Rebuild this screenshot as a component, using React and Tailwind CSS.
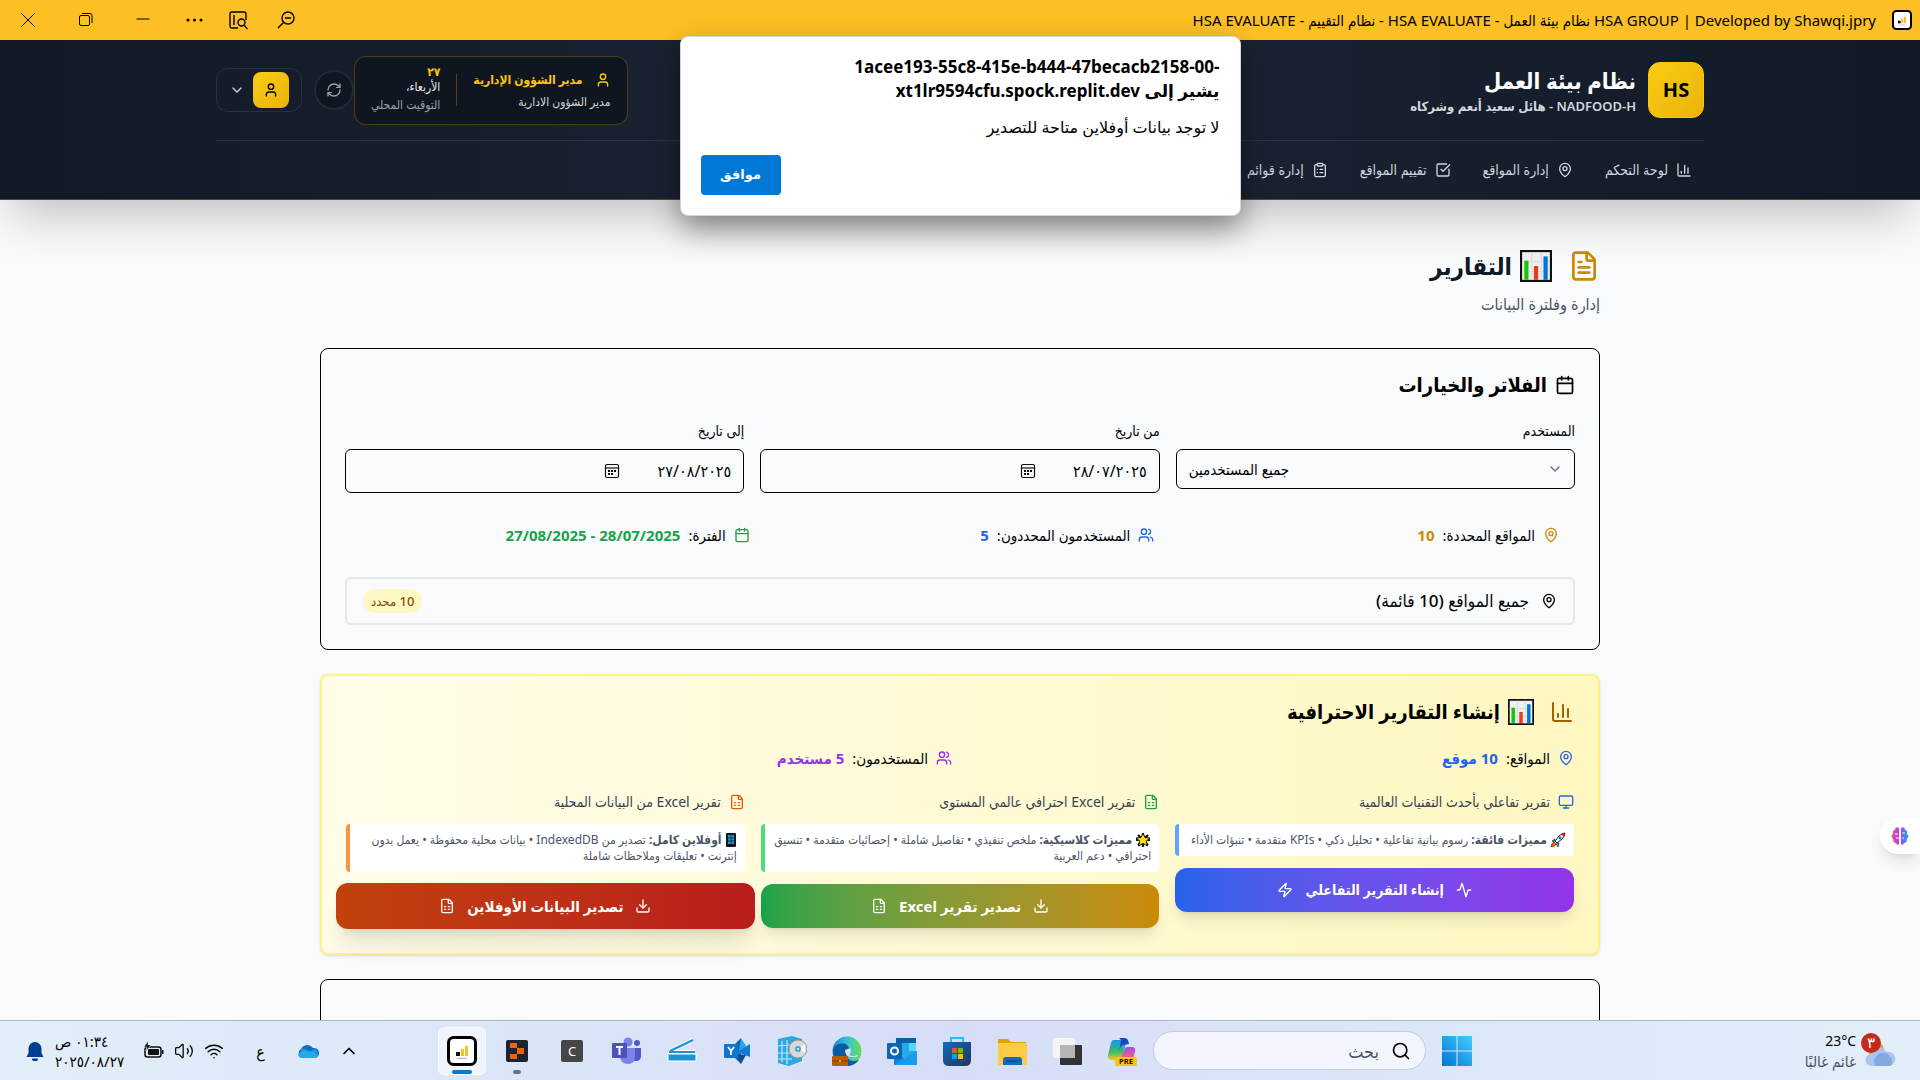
import React from "react";
import {
  Activity, Calendar, ChartColumn, ChevronDown, ChevronUp, ClipboardList, Download, FileSpreadsheet,
  FileText, MapPin, Monitor, RefreshCw, Search, SquareCheckBig, User, Users, Volume2, Wifi, Zap,
} from "lucide-react";

const ChartEmoji = ({ className }) => (
  <svg className={className} viewBox="0 0 30 30" aria-hidden="true">
    <rect x="1" y="1" width="28" height="28" fill="#f0f0f0" stroke="#111" strokeWidth="2" />
    <path d="M2 11h26M2 20h26M11 2v26M20 2v26" stroke="#d9d9d9" strokeWidth="1" />
    <path fill="#16c60c" d="M4 10h4v18H4z" />
    <path fill="#f03a17" d="M13 15h4v13h-4z" />
    <path fill="#0078d7" d="M22 6h4v22h-4z" />
  </svg>
);

const Rocket = () => (
  <svg className="inline-block size-4 align-text-bottom" viewBox="0 0 16 16" aria-hidden="true">
    <path d="M5 9 9 4q3-3 6-3 0 3-3 6l-5 4z" fill="#f4f4f4" stroke="#222" />
    <path d="M11 2q2-1 4-1 0 2-1 4z" fill="#e81224" />
    <path d="M5 7 2 9l2 1zM9 11l-1 4-2-3z" fill="#3ac5f0" stroke="#222" strokeWidth=".7" />
    <path d="M1 15q0-4 3-5l2 2q-1 3-5 3z" fill="#f7630c" stroke="#222" strokeWidth=".5" />
    <circle cx="10" cy="6" r="1.4" fill="#0078d7" />
  </svg>
);

const Star = () => (
  <svg className="inline-block size-4 align-text-bottom" viewBox="0 0 16 16" aria-hidden="true">
    <path d="M8 1v14M1 8h14M3 3l10 10M13 3 3 13" stroke="#111" strokeWidth="2.200" />
    <path d="m8 1 2 4.600 5 .4-3.800 3.200L12.400 14 8 11.400 3.600 14l1.200-4.800L1 6l5-.4z" fill="#ffe000" stroke="#111" />
  </svg>
);

const Phone = () => (
  <svg className="inline-block h-4 w-3 align-text-bottom" viewBox="0 0 12 16" aria-hidden="true">
    <rect x="1" y="1" width="10" height="14" rx="1" fill="#161616" />
    <path fill="#0a9be0" d="M3 3h6v9H3z" />
    <path d="M6 3v9M3 6h6M3 9h6" stroke="#161616" strokeWidth=".7" />
  </svg>
);

const AppBadge = ({ className }) => (
  <svg className={className} viewBox="0 0 30 30" aria-hidden="true">
    <rect x="1.500" y="1.500" width="27" height="27" rx="5" fill="#fff" stroke="#000" strokeWidth="3" />
    <path fill="#111" d="M9 16h4v4H9z" />
    <path fill="#fbbf24" d="M14 13h3v7h-3zM18 10h3v10h-3z" />
    <path stroke="#999" strokeWidth=".8" d="M10 22.500h10" />
  </svg>
);

function TitleBar() {
  return (
    <div className="flex h-10 shrink-0 items-center justify-between bg-[#fcbf24] pl-[18px] pr-2 text-black">
      <div className="flex items-center gap-4 text-[15px] leading-5 font-['Noto_Sans','DejaVu_Sans_Condensed','DejaVu_Sans',sans-serif]">
        <AppBadge className="size-5" />
        <span>HSA GROUP | Developed by Shawqi.jpry نظام بيئة العمل - HSA EVALUATE - نظام التقييم - HSA EVALUATE</span>
      </div>
      <div dir="ltr" className="flex items-center">
        <button aria-label="إغلاق" className="mr-[38px]">
          <svg className="size-5" viewBox="0 0 20 20" stroke="currentColor" fill="none"><path d="m3.500 3.500 13 13M16.500 3.500l-13 13" /></svg>
        </button>
        <button aria-label="استعادة" className="mr-[37px]">
          <svg className="size-5" viewBox="0 0 20 20" stroke="currentColor" fill="none"><rect x="3.500" y="5.500" width="10" height="10" rx="1.500" /><path d="M6 3.500h8a2 2 0 0 1 2 2V13" /></svg>
        </button>
        <button aria-label="تصغير" className="mr-8">
          <svg className="size-5" viewBox="0 0 20 20" stroke="currentColor"><path d="M3.500 9h13" /></svg>
        </button>
        <button aria-label="المزيد" className="mr-6">
          <svg className="size-5" viewBox="0 0 20 20" fill="currentColor"><circle cx="3" cy="10" r="1.500" /><circle cx="9.500" cy="10" r="1.500" /><circle cx="16" cy="10" r="1.500" /></svg>
        </button>
        <button aria-label="بحث في الصفحة" className="mr-7">
          <svg className="size-5" viewBox="0 0 20 20" stroke="currentColor" fill="none" strokeWidth="1.400"><path d="M9 18H3a2 2 0 0 1-2-2V4a2 2 0 0 1 2-2h12a2 2 0 0 1 2 2v6M5 5v10" /><circle cx="12.500" cy="12.500" r="3.500" /><path d="m15 15 3.500 4" /></svg>
        </button>
        <button aria-label="تصغير العرض">
          <svg className="size-5" viewBox="0 0 20 20" stroke="currentColor" fill="none" strokeWidth="1.400"><circle cx="11" cy="8" r="6" /><path d="M8 8h6M6.500 12.500 1 18" /></svg>
        </button>
      </div>
    </div>
  );
}

const navItems = [
  [ChartColumn, "لوحة التحكم"],
  [MapPin, "إدارة المواقع"],
  [SquareCheckBig, "تقييم المواقع"],
  [ClipboardList, "إدارة قوائم"],
];

function Header() {
  return (
    <header className="relative z-10 shrink-0 border-b border-yellow-500/30 bg-linear-to-r from-[#121826] via-[#1c2635] to-[#121826] shadow-2xl">
      <div className="mx-auto max-w-[1536px] px-6">
        <div className="flex h-[101px] items-center justify-between border-b border-slate-700/60">
          <div className="flex items-center gap-3">
            <div className="flex size-14 items-center justify-center rounded-xl border border-yellow-400 bg-linear-to-br from-[#facc15] to-[#eab308] text-xl font-bold text-black">HS</div>
            <div>
              <h1 className="text-[22px] leading-8 font-bold text-white">نظام بيئة العمل</h1>
              <p className="text-[13px] leading-5 font-semibold text-gray-300">NADFOOD-H - هائل سعيد أنعم وشركاه</p>
            </div>
          </div>
          <div className="flex items-center">
            <div className="flex h-[69px] items-center rounded-xl border border-yellow-500/25 bg-[#10161f] px-4">
              <div className="pl-4">
                <div className="flex items-center gap-3 text-xs leading-5 font-bold text-yellow-400">
                  <User className="size-4" />مدير الشؤون الإدارية
                </div>
                <div className="mt-1 text-xs leading-4 text-gray-300">مدير الشؤون الادارية</div>
              </div>
              <div className="h-8 w-px bg-yellow-500/30" />
              <div className="pr-4 text-xs">
                <div className="leading-[10px] font-bold text-yellow-400">٢٧</div>
                <div className="leading-5 text-gray-200">الأربعاء،</div>
                <div className="leading-4 text-gray-400">التوقيت المحلي</div>
              </div>
            </div>
            <button aria-label="تحديث" className="flex size-10 items-center justify-center rounded-full border-2 border-gray-800 bg-[#10161f] text-gray-400">
              <RefreshCw className="size-4" />
            </button>
            <button aria-label="حساب المستخدم" className="mr-3 flex h-11 w-[86px] items-center justify-between rounded-xl border border-slate-700/60 pr-3 pl-3 text-gray-300">
              <span className="flex size-9 items-center justify-center rounded-lg bg-linear-to-br from-[#facc15] to-[#eab308] text-black"><User className="size-4" /></span>
              <ChevronDown className="size-4" />
            </button>
          </div>
        </div>
        <nav className="flex h-[58px] items-center gap-2">
          {navItems.map(([Icon, label]) => (
            <a key={label} href="#" className="flex items-center gap-2 px-3 text-sm leading-5 font-medium text-gray-300">
              <Icon className="size-4" />{label}
            </a>
          ))}
        </nav>
      </div>
    </header>
  );
}

const CalendarGrid = () => (
  <svg className="size-4" viewBox="0 0 16 16" fill="none" stroke="#111" strokeWidth="1.200" aria-hidden="true">
    <rect x="1.500" y="1.500" width="13" height="13" rx="1.500" /><path d="M1.500 5h13" />
    <path d="M4 8h2M7 8h2M10 8h2M4 11h2M7 11h2" strokeWidth="1.800" />
  </svg>
);

function DateField({ id, label, value }) {
  return (
    <div>
      <label htmlFor={id} className="block text-sm leading-5 text-black">{label}</label>
      <div className="mt-2 flex h-11 items-center rounded-md border border-black px-3">
        <input id={id} type="text" defaultValue={value} className="w-[111px] bg-transparent text-base text-black outline-none" />
        <button aria-label="فتح التقويم"><CalendarGrid /></button>
      </div>
    </div>
  );
}

function Stat({ icon: Icon, color, label, value }) {
  return (
    <div className="flex items-center gap-2 text-[15px] leading-5 text-black">
      <Icon className={`size-4 ${color}`} />
      <span>{label}</span>
      <span className={`font-bold ${color}`}>{value}</span>
    </div>
  );
}

function Filters() {
  return (
    <section className="rounded-lg border border-black p-6 pt-5">
      <h2 className="flex items-center gap-2 text-xl leading-8 font-bold text-black"><Calendar className="size-5" />الفلاتر والخيارات</h2>
      <div className="mt-5 grid grid-cols-3 gap-4">
        <div>
          <label htmlFor="user" className="block text-sm leading-5 text-black">المستخدم</label>
          <div className="relative mt-2">
            <select id="user" dir="ltr" className="h-10 w-full appearance-none rounded-md border border-black bg-transparent px-3 text-[15px] text-black">
              <option>جميع المستخدمين</option>
            </select>
            <ChevronDown className="pointer-events-none absolute top-3 right-3 size-4 text-gray-500" />
          </div>
        </div>
        <DateField id="from" label="من تاريخ" value="٢٨/٠٧/٢٠٢٥" />
        <DateField id="to" label="إلى تاريخ" value="٢٧/٠٨/٢٠٢٥" />
      </div>
      <div className="mt-4 grid grid-cols-3 gap-4 px-4 py-4">
        <Stat icon={MapPin} color="text-[#ca8a04]" label="المواقع المحددة:" value="10" />
        <Stat icon={Users} color="text-[#2563eb]" label="المستخدمون المحددون:" value="5" />
        <Stat icon={Calendar} color="text-[#16a34a]" label="الفترة:" value="28/07/2025 - 27/08/2025" />
      </div>
      <div className="mt-4 flex h-12 items-center justify-between rounded-md border-2 border-gray-200 px-4">
        <div className="flex items-center gap-3 text-[17px] leading-6 font-medium text-black"><MapPin className="size-4" />جميع المواقع (10 قائمة)</div>
        <span className="rounded-full bg-[#fef9c3] px-2 py-1 text-[13px] leading-4 font-medium text-[#854d0e]">10 محدد</span>
      </div>
    </section>
  );
}

function ReportColumn({ icon: Icon, iconColor, title, border, children, button }) {
  return (
    <div>
      <div className="flex items-center gap-2 text-sm leading-5 text-gray-700"><Icon className={`size-4 ${iconColor}`} />{title}</div>
      <div className={`mt-3 rounded border-l-4 bg-white p-2 text-xs leading-4 text-gray-600 ${border}`}>{children}</div>
      {button}
    </div>
  );
}

function Reports() {
  return (
    <section className="mt-6 rounded-lg border-2 border-[#fef08a] bg-linear-to-r from-[#fffce8] to-[#fef7c0] px-6 pt-5 pb-6 shadow-sm">
      <h2 className="flex items-center gap-4 text-xl leading-8 font-bold text-black">
        <ChartColumn className="size-6 text-[#a16207]" />
        <span className="flex items-center gap-2"><ChartEmoji className="size-[26px]" />إنشاء التقارير الاحترافية</span>
      </h2>
      <div className="mt-5 grid grid-cols-2 gap-4">
        <Stat icon={MapPin} color="text-[#2563eb]" label="المواقع:" value="10 موقع" />
        <Stat icon={Users} color="text-[#9333ea]" label="المستخدمون:" value="5 مستخدم" />
      </div>
      <div className="mt-6 grid grid-cols-3 gap-4">
        <ReportColumn icon={Monitor} iconColor="text-[#2563eb]" title="تقرير تفاعلي بأحدث التقنيات العالمية" border="border-l-[#60a5fa]"
          button={
            <button className="mt-3 flex h-11 w-full items-center justify-center gap-3 rounded-xl bg-linear-to-r from-[#2563eb] to-[#9333ea] text-sm font-bold text-white shadow-lg">
              <Activity className="size-4" />إنشاء التقرير التفاعلي<Zap className="size-4" />
            </button>
          }>
          <Rocket /> <strong>مميزات فائقة:</strong> رسوم بيانية تفاعلية • تحليل ذكي • KPIs متقدمة • تنبؤات الأداء
        </ReportColumn>
        <ReportColumn icon={FileSpreadsheet} iconColor="text-[#16a34a]" title="تقرير Excel احترافي عالمي المستوى" border="border-l-[#4ade80]"
          button={
            <button className="mt-3 flex h-11 w-full items-center justify-center gap-3 rounded-xl bg-linear-to-r from-[#16a34a] to-[#ca8a04] text-[15px] font-bold text-white shadow-lg">
              <Download className="size-4" />تصدير تقرير Excel<FileSpreadsheet className="size-4" />
            </button>
          }>
          <Star /> <strong>مميزات كلاسيكية:</strong> ملخص تنفيذي • تفاصيل شاملة • إحصائيات متقدمة • تنسيق احترافي • دعم العربية
        </ReportColumn>
        <ReportColumn icon={FileSpreadsheet} iconColor="text-[#ea580c]" title="تقرير Excel من البيانات المحلية" border="border-l-[#fb923c]"
          button={
            <div className="-mx-[10px] mt-[11px]">
              <button className="flex h-[46px] w-full items-center justify-center gap-3 rounded-xl bg-linear-to-r from-[#c2410c] to-[#b91c1c] text-[15px] font-bold text-white shadow-xl">
                <Download className="size-4" />تصدير البيانات الأوفلاين<FileSpreadsheet className="size-4" />
              </button>
            </div>
          }>
          <Phone /> <strong>أوفلاين كامل:</strong> تصدير من IndexedDB • بيانات محلية محفوظة • يعمل بدون إنترنت • تعليقات وملاحظات شاملة
        </ReportColumn>
      </div>
    </section>
  );
}

function Dialog() {
  return (
    <div role="alertdialog" aria-labelledby="dialog-title" className="absolute inset-x-0 top-9 z-30 mx-auto w-[561px] rounded-lg border border-gray-300 bg-white px-5 pt-[18px] pb-5 text-black shadow-[0_14px_30px_rgba(0,0,0,0.4)] font-['Noto_Sans','DejaVu_Sans',sans-serif]">
      <div id="dialog-title" className="text-[17px] leading-6 font-bold">
        <div dir="ltr" className="text-right">1acee193-55c8-415e-b444-47becacb2158-00-</div>
        <div>يشير إلى xt1lr9594cfu.spock.replit.dev</div>
      </div>
      <p className="mt-3 text-base leading-6">لا توجد بيانات أوفلاين متاحة للتصدير</p>
      <div className="mt-4 flex justify-end">
        <button className="h-10 w-20 rounded bg-[#0078d7] text-[13px] font-bold text-white">موافق</button>
      </div>
    </div>
  );
}

const apps = [
  ["Copilot", <g><path d="M6 4h14l-6 20H5q-5 0-4-5L4 7q1-3 2-3z" fill="url(#cpA)" /><path d="M20 11h5q4 0 3 5l-2 8H13l4-10q1-3 3-3z" fill="url(#cpB)" /><path d="M12 2h6q3 0 4 6l-6 1q-3 0-4 8l2-13z" fill="#1648c8" /><rect x="8" y="21" width="22" height="9" rx="2" fill="#fcc419" /><text x="19" y="28" fontSize="7.500" fontWeight="700" textAnchor="middle" fill="#111" fontFamily="Noto Sans">PRE</text></g>],
  ["عرض المهام", <g><rect x="8" y="9" width="22" height="20" rx="1" fill="#333" /><rect x="1" y="2" width="22" height="20" rx="1" fill="#f4f4f4" /><path d="M8 9h15v13H8z" fill="#b5b5b5" /></g>],
  ["مستكشف الملفات", <g><path d="M1 3h10l3 3h15v6H1z" fill="#e0a30b" /><rect x="1" y="7" width="29" height="22" rx="1" fill="#ffcb45" /><path d="M6 29v-5q0-3 3-3h13q3 0 3 3v5z" fill="#0f6cbd" /><path d="M9 25h13" stroke="#083f73" /></g>],
  ["المتجر", <g><path d="M9 7V2h12v5" fill="none" stroke="#24bdf2" strokeWidth="2" /><path d="M1 6h28v18q0 6-6 6H7q-6 0-6-6z" fill="url(#st)" /><path fill="#f25022" d="M10 12h5v5h-5z" /><path fill="#7fba00" d="M16 12h5v5h-5z" /><path fill="#00a4ef" d="M10 18h5v5h-5z" /><path fill="#ffb900" d="M16 18h5v5h-5z" /></g>],
  ["Outlook", <g><path fill="#28a8ea" d="M9 2h20v20H9z" /><path fill="#0a5fa8" d="M9 2h20v5H9z" /><path fill="#50d9ff" d="M22 7h7v8h-7z" /><path fill="#1283d8" d="m7 15 11 8 12-8v14H7z" /><path fill="#1a9bea" d="m7 29 23-14v14z" /><rect x="0" y="7" width="15" height="16" rx="1" fill="#0a66b7" /><circle cx="7.500" cy="15" r="3.500" fill="none" stroke="#fff" strokeWidth="2" /></g>],
  ["Edge", <g><circle cx="15" cy="15" r="14.500" fill="url(#eg)" /><path d="M1 14C4 5 17 6 17 13q-5 2-2 8t12 3q-5 6-12 6Q1 29 1 14z" fill="#0c59a4" /><path d="M13 14q6-3 6 0t-2 5q4 2 9 0 0 2-4 2-9 1-9-7z" fill="#dbe4f7" /><rect x="0" y="20" width="16" height="10" rx="1" fill="#b85c00" /><path d="M0 25h16" stroke="#7b3c00" /><circle cx="8" cy="25" r="1" fill="#ffc83d" /></g>],
  ["التثبيت", <g><path d="m1 3 14-3 10 3v22l-13 5L1 27z" fill="#2ca7e0" /><path d="M5 5v21M10 4v24M1 10l13-1M1 17h14M1 23h14" stroke="#bce9fb" strokeWidth="1.200" /><circle cx="21" cy="13" r="9" fill="#d9d9d9" stroke="#999" /><path d="m21 13 7-5v9z" fill="#f7f7f7" /><circle cx="21" cy="13" r="3" fill="#3ea9cb" /><circle cx="21" cy="13" r="1" fill="#fff" /></g>],
  ["Viva Engage", <g><path d="M19 2v26l-7-7V9z" fill="#0b63b0" /><path d="m19 2 5 8-8 9z" fill="#23a6ec" /><path d="m15 16 13-8v13z" fill="#1479d4" /><path d="m14 18 10 1-5 9z" fill="#0a4e8f" /><rect x="2" y="8" width="14" height="14" rx="1" fill="#1074d0" /><path d="m6 11 3 4 3-4M9 15v4" fill="none" stroke="#fff" strokeWidth="1.800" /></g>],
  ["الماسح", <g><path d="m3 15 23-11M2 16h26" stroke="#fff" strokeWidth="4" /><path d="m3 15 23-11" stroke="#1e94cf" strokeWidth="2.400" /><path d="M2 16h26" stroke="#1e94cf" strokeWidth="2" /><path d="M1 18h28v7H1z" fill="#1e94cf" stroke="#fff" /></g>],
  ["Teams", <g><circle cx="25" cy="7" r="3" fill="#5059c9" /><path d="M18 12h11v8q0 5-5 5h-6z" fill="#5059c9" /><circle cx="16" cy="6" r="4.500" fill="#7b83eb" /><path d="M8 12h15v9q0 7-7 7t-8-7z" fill="#7b83eb" /><rect x="0" y="7" width="15" height="15" rx="1" fill="#4b53bc" /><path d="M4 11h7M7.500 11v8" stroke="#fff" strokeWidth="2" /></g>],
  ["C", <g><rect x="4" y="4" width="22" height="22" rx="2" fill="#464646" /><text x="15" y="20" fontSize="13" textAnchor="middle" fill="#fff" fontFamily="Noto Sans">C</text></g>],
  ["Replit", <g><rect x="4" y="4" width="22" height="22" rx="2" fill="#1c2333" /><path fill="#f26207" d="M8 7h7v5H8zM15 12h7v6h-7zM8 18h7v5H8z" /></g>],
];

function Taskbar() {
  return (
    <footer className="grid h-[60px] shrink-0 grid-cols-[1fr_auto_1fr] items-center border-t border-[#b0b6c3] bg-linear-to-r from-[#e2eef9] via-[#d6def7] to-[#e2effa]">
      <svg width="0" height="0" className="absolute" aria-hidden="true">
        <defs>
          <linearGradient id="cpA" x1="0" y1="0" x2="0" y2="1"><stop stopColor="#1597e8" /><stop offset=".6" stopColor="#3dbb6a" /><stop offset="1" stopColor="#f7c81e" /></linearGradient>
          <linearGradient id="cpB" x1="0" y1="0" x2="0" y2="1"><stop stopColor="#a44cf0" /><stop offset="1" stopColor="#ff6a5f" /></linearGradient>
          <linearGradient id="st" x1="0" y1="0" x2="1" y2="1"><stop stopColor="#0f6cbd" /><stop offset="1" stopColor="#25355c" /></linearGradient>
          <linearGradient id="eg"><stop stopColor="#1b83d8" /><stop offset=".5" stopColor="#33c3d8" /><stop offset="1" stopColor="#6bdc4f" /></linearGradient>
          <linearGradient id="win" x1="0" y1="1" x2="1" y2="0"><stop stopColor="#0075d4" /><stop offset="1" stopColor="#45cdfb" /></linearGradient>
          <linearGradient id="brain"><stop stopColor="#f0568d" /><stop offset=".5" stopColor="#a43df5" /><stop offset="1" stopColor="#1ba8f5" /></linearGradient>
        </defs>
      </svg>
      <div className="flex items-center gap-1 pr-6">
        <svg className="size-9" viewBox="0 0 36 36" aria-hidden="true">
          <circle cx="16" cy="17" r="8" fill="#f9a11b" />
          <path d="M12 33a6 6 0 0 1-1-12 8 8 0 0 1 15-2 7 7 0 0 1 4 14z" fill="#a9c5ee" />
          <path d="M16 33a6 6 0 0 1 0-9 8 8 0 0 1 14 0 6 6 0 0 1 0 9z" fill="#83a9e0" />
          <circle cx="11" cy="10" r="10" fill="#c42b1c" />
          <text x="11" y="15" fontSize="15" textAnchor="middle" fill="#fff" fontFamily="DejaVu Sans">٣</text>
        </svg>
        <div className="text-sm leading-5">
          <div dir="ltr" className="text-right text-black">23°C</div>
          <div className="text-[15px] text-gray-600">غائم غالبًا</div>
        </div>
      </div>
      <div className="flex items-center pr-[10px]">
        <button aria-label="ابدأ" className="ml-4">
          <svg className="size-[30px]" viewBox="0 0 30 30"><path fill="url(#win)" d="M0 0h14.500v14.500H0zM15.500 0H30v14.500H15.500zM0 15.500h14.500V30H0zM15.500 15.500H30V30H15.500z" /></svg>
        </button>
        <label className="ml-4 flex h-[39px] w-[273px] items-center gap-3 rounded-full border border-[#c5cbe0] bg-[#f2f5fd] px-[14px]">
          <Search className="size-5 shrink-0 text-black" />
          <input placeholder="بحث" aria-label="بحث" className="w-40 bg-transparent text-lg outline-none placeholder:text-gray-600" />
        </label>
        <div className="flex items-center gap-[25px]">
          {apps.map(([name, art]) => (
            <button key={name} aria-label={name} className="relative">
              <svg className="size-[30px]" viewBox="0 0 30 30">{art}</svg>
              {name === "Replit" && <span className="absolute inset-x-0 -bottom-2 mx-auto h-1 w-2 rounded-full bg-gray-500" />}
            </button>
          ))}
        </div>
        <button aria-label="HSA" className="relative mr-4 flex size-12 items-center justify-center rounded-md border border-white/60 bg-white/50">
          <AppBadge className="size-[30px]" />
          <span className="absolute inset-x-0 bottom-0 mx-auto h-1 w-5 rounded-full bg-[#0078d4]" />
        </button>
      </div>
      <div className="flex items-center justify-end pl-[25px] text-black">
        <button aria-label="إظهار الرموز المخفية" className="ml-5"><ChevronUp className="size-5" /></button>
        <svg className="ml-8 size-[22px]" viewBox="0 0 22 22" aria-hidden="true"><path d="M5 18a5 5 0 0 1-1-9 7 7 0 0 1 12-1 5 5 0 0 1 2 10z" fill="#0f6fc5" /><path d="M4 9q5-1 8 3l6-3a5 5 0 0 1 0 9H5" fill="#1e96e6" /><path d="M1 15q3-5 10-4 6 1 10 4 0 3-3 3H5q-3 0-4-3z" fill="#28a8ea" /></svg>
        <span className="ml-8 text-base leading-6">ع</span>
        <Wifi className="ml-[10px] size-5" strokeWidth={1.800} />
        <Volume2 className="ml-[10px] size-5" strokeWidth={1.500} />
        <svg className="ml-5 size-5" viewBox="0 0 20 20" aria-hidden="true"><rect x="1" y="6" width="16" height="10" rx="2.500" fill="none" stroke="#111" strokeWidth="1.500" /><rect x="4" y="8" width="11" height="6" rx="1" fill="#111" /><path d="M18 9h1.500v4H18z" fill="#111" /><path d="M4 0 0 6h3L2 10l5-6H4z" fill="#111" stroke="#e2eef9" strokeWidth=".5" /></svg>
        <div className="ml-[10px] text-left text-[15px] leading-5">
          <div>٠١:٣٤ ص</div>
          <div dir="ltr">٢٠٢٥/٠٨/٢٧</div>
        </div>
        <svg className="size-5" viewBox="0 0 20 20" fill="#003e92" aria-hidden="true"><path d="M10 1a6.500 6.500 0 0 1 6.500 6.500V12l2 4h-17l2-4V7.500A6.500 6.500 0 0 1 10 1zM7 17.500h6a3 3 0 0 1-6 0z" /></svg>
      </div>
    </footer>
  );
}

export default function App() {
  return (
    <div dir="rtl" className="relative flex h-screen flex-col overflow-hidden bg-[#f9fafc] font-['Noto_Sans','DejaVu_Sans_Condensed','DejaVu_Sans',sans-serif]">
      <TitleBar />
      <div className="relative flex min-h-0 flex-1 flex-col overflow-hidden">
        <Header />
        <main className="mx-auto w-full max-w-7xl pt-12">
          <h1 className="flex items-center gap-4 text-2xl leading-9 font-bold text-gray-900">
            <FileText className="size-8 text-[#ca8a04]" />
            <span className="flex items-center gap-2"><ChartEmoji className="size-8" />التقارير</span>
          </h1>
          <p className="mt-2 mb-8 text-base leading-6 text-gray-600">إدارة وفلترة البيانات</p>
          <Filters />
          <Reports />
          <section className="mt-6 h-40 rounded-lg border border-black" />
        </main>
        <button aria-label="المساعد" className="absolute top-[778px] right-0 flex h-9 w-10 items-center justify-center rounded-l-full bg-white shadow-lg">
          <svg className="size-5" viewBox="0 0 20 20">
            <path d="M9 2Q5 0 5 4 2 4 3 8q-3 2 0 5 0 4 3 4 1 3 3 1zM11 2q4-2 4 2 3 0 2 4 3 2 0 5 0 4-3 4-1 3-3 1z" fill="url(#brain)" />
            <path d="M5 8h3M6 12h3M12 7h3M12 12h2" stroke="#fff" />
          </svg>
        </button>
      </div>
      <Taskbar />
      <Dialog />
    </div>
  );
}
